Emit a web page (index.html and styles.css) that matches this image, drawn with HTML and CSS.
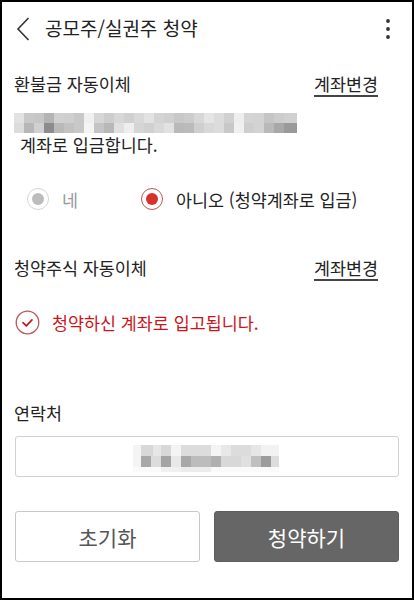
FILE: index.html
```html
<!DOCTYPE html>
<html lang="ko">
<head>
<meta charset="utf-8">
<title>공모주/실권주 청약</title>
<link rel="stylesheet" href="styles.css">
</head>
<body>
<div class="frame">
  <header class="topbar">
    <svg class="back" width="14" height="24" viewBox="0 0 14 24"><path d="M12.5 1 L2 12 L12.5 23" fill="none" stroke="#333" stroke-width="1.6"/></svg>
    <h1 class="title">공모주/실권주 청약</h1>
    <svg class="kebab" width="6" height="22" viewBox="0 0 6 22"><circle cx="3" cy="3" r="1.9" fill="#333"/><circle cx="3" cy="11" r="1.9" fill="#333"/><circle cx="3" cy="19" r="1.9" fill="#333"/></svg>
  </header>
  <main class="content">
    <div class="sec-head first">
      <span class="sec-title">환불금 자동이체</span>
      <a class="change">계좌변경</a>
    </div>
    <div class="mosaic"></div>
    <p class="deposit">계좌로 입금합니다.</p>
    <div class="radios">
      <label class="radio disabled"><span class="dot"></span><span>네</span></label>
      <label class="radio checked"><span class="dot"></span><span>아니오 (청약계좌로 입금)</span></label>
    </div>
    <div class="sec-head second">
      <span class="sec-title">청약주식 자동이체</span>
      <a class="change">계좌변경</a>
    </div>
    <div class="notice">
      <svg class="check" width="25" height="25" viewBox="0 0 25 25"><circle cx="12.5" cy="12.5" r="11.3" fill="none" stroke="#b85a5a" stroke-width="1.3"/><path d="M8 12.6 L11.3 15.8 L17 9.8" fill="none" stroke="#c8161d" stroke-width="1.7" stroke-linecap="round" stroke-linejoin="round"/></svg>
      <span>청약하신 계좌로 입고됩니다.</span>
    </div>
    <div class="label">연락처</div>
    <div class="input"><span class="phone"></span></div>
    <div class="buttons">
      <button class="btn reset">초기화</button>
      <button class="btn submit">청약하기</button>
    </div>
  </main>
</div>
</body>
</html>
```
FILE: styles.css
```css
* { box-sizing: border-box; }
html, body { margin: 0; padding: 0; background: #fff; }
body {
  font-family: "Noto Sans CJK KR", "Noto Sans", sans-serif;
  color: #222;
}
.frame {
  width: 414px;
  height: 600px;
  border: 2px solid #000;
  overflow: hidden;
  background: #fff;
}
.topbar {
  height: 52px;
  display: flex;
  align-items: center;
  padding: 0 0 0 14px;
}
.back { display: block; margin-top: 2px; }
.title {
  margin: 0 0 0 15px;
  font-size: 19px;
  font-weight: 400;
  line-height: 24px;
  color: #222;
  flex: 1;
}
.kebab { display: block; margin-right: 21px; margin-top: 1px; }
.content { padding: 0 13px; }
.sec-head {
  display: flex;
  justify-content: space-between;
  align-items: center;
  line-height: 24px;
  font-size: 17.4px;
}
.sec-head.first { margin-top: 18px; }
.sec-head.second { margin-top: 45px; }
.sec-title { margin-left: -1px; }
.change {
  margin-right: 21px;
  color: #222;
  text-decoration: underline;
  text-decoration-color: #444;
  text-decoration-thickness: 1.5px;
  text-underline-offset: 4px;
}
.mosaic {
  margin: 17px 0 0 -1px;
  width: 283px;
  height: 20px;
  background:
    linear-gradient(to right,
      #e2e2e2 0 10px, #c9c9c9 10px 20px, #c6c6c6 20px 30px, #b4b4b4 30px 40px,
      #d0d0d0 40px 50px, #cfcfcf 50px 60px, #c8c8c8 60px 70px, #f0f0f0 70px 80px,
      #d6d6d6 80px 90px, #cdcdcd 90px 100px, #d7d7d7 100px 110px, #d0d0d0 110px 120px,
      #d9d9d9 120px 130px, #e2e2e2 130px 140px, #d4d4d4 140px 150px, #d0d0d0 150px 160px,
      #c8c8c8 160px 170px, #cccccc 170px 180px, #d7d7d7 180px 190px, #e5e5e5 190px 200px,
      #dcdcdc 200px 210px, #d0d0d0 210px 220px, #eeeeee 220px 230px, #d4d4d4 230px 240px,
      #d3d3d3 240px 250px, #c5c5c5 250px 260px, #cccccc 260px 270px, #d0d0d0 270px 283px)
      top / 100% 50% no-repeat,
    linear-gradient(to right,
      #dcdcdc 0 10px, #b7b7b7 10px 20px, #d0d0d0 20px 30px, #8c8c8c 30px 40px,
      #b9b9b9 40px 50px, #c2c2c2 50px 60px, #c8c8c8 60px 70px, #f4f4f4 70px 80px,
      #c4c4c4 80px 90px, #b8b8b8 90px 100px, #e0e0e0 100px 110px, #eeeeee 110px 120px,
      #d5d5d5 120px 130px, #d0d0d0 130px 140px, #d9d9d9 140px 150px, #e2e2e2 150px 160px,
      #b9b9b9 160px 170px, #bbbbbb 170px 180px, #cfcfcf 180px 190px, #d8d8d8 190px 200px,
      #dcdcdc 200px 210px, #c8c8c8 210px 220px, #f0f0f0 220px 230px, #cecece 230px 240px,
      #d3d3d3 240px 250px, #b9b9b9 250px 260px, #a8a8a8 260px 270px, #9a9a9a 270px 283px)
      bottom / 100% 50% no-repeat;
}
.deposit {
  margin: 1px 0 0 5px;
  font-size: 17.4px;
  line-height: 22px;
}
.radios {
  margin-top: 31px;
  height: 24px;
  display: flex;
  align-items: center;
  padding-left: 12px;
  font-size: 17.4px;
}
.radio {
  display: flex;
  align-items: center;
  gap: 13px;
}
.radio.disabled { width: 114px; color: #999; }
.dot {
  width: 22px;
  height: 22px;
  border-radius: 50%;
  display: flex;
  align-items: center;
  justify-content: center;
  flex: none;
}
.dot::after {
  content: "";
  width: 12px;
  height: 12px;
  border-radius: 50%;
}
.disabled .dot { border: 1px solid #d6d6d6; }
.disabled .dot::after { background: #bcbcbc; }
.checked .dot { border: 1px solid #c25555; }
.checked .dot::after { background: #d8302a; }
.checked { color: #222; }
.notice {
  margin-top: 30px;
  height: 24px;
  display: flex;
  align-items: center;
  gap: 12px;
  font-size: 17.4px;
  color: #c8161d;
}
.check { display: block; }
.label {
  margin-top: 67px;
  line-height: 24px;
  font-size: 17.4px;
  margin-left: -1px;
}
.input {
  margin-top: 11px;
  height: 41px;
  border: 1px solid #d0d0d0;
  border-radius: 3px;
  display: flex;
  align-items: center;
  padding-left: 117px;
}
.phone {
  display: block;
  width: 146px;
  height: 27px;
  margin-top: 4px;
  background:
    linear-gradient(to right,
      #f4f4f4 0 8px, #d8d8d8 8px 20px, #e6e6e6 20px 28px, #d8d8d8 28px 38px,
      #f4f4f4 38px 48px, #dcdcdc 48px 78px, #f4f4f4 78px 88px, #e8e8e8 88px 98px,
      #dcdcdc 98px 118px, #e6e6e6 118px 128px, #f2f2f2 128px 146px)
      0 0 / 100% 11px no-repeat,
    linear-gradient(to right,
      #f4f4f4 0 8px, #a8a8a8 8px 18px, #dcdcdc 18px 28px, #a4a4a4 28px 38px,
      #e8e8e8 38px 48px, #a8a8a8 48px 58px, #bcbcbc 58px 78px, #b0b0b0 78px 88px,
      #d8d8d8 88px 108px, #e0e0e0 108px 118px, #c0c0c0 118px 128px, #9c9c9c 128px 138px,
      #dcdcdc 138px 146px)
      0 11px / 100% 11px no-repeat,
    linear-gradient(to right,
      #fafafa 0 28px, #f0f0f0 28px 48px, #ececec 48px 78px, #fafafa 78px 146px)
      0 22px / 100% 5px no-repeat;
}
.buttons {
  margin-top: 34px;
  display: flex;
  gap: 14px;
}
.btn {
  flex: 1;
  height: 51px;
  border-radius: 3px;
  font-family: inherit;
  font-size: 21px;
  cursor: pointer;
}
.reset {
  background: #fff;
  border: 1px solid #c8c8c8;
  color: #555;
}
.submit {
  background: #666;
  border: 1px solid #5e5e5e;
  color: #fff;
}
```
